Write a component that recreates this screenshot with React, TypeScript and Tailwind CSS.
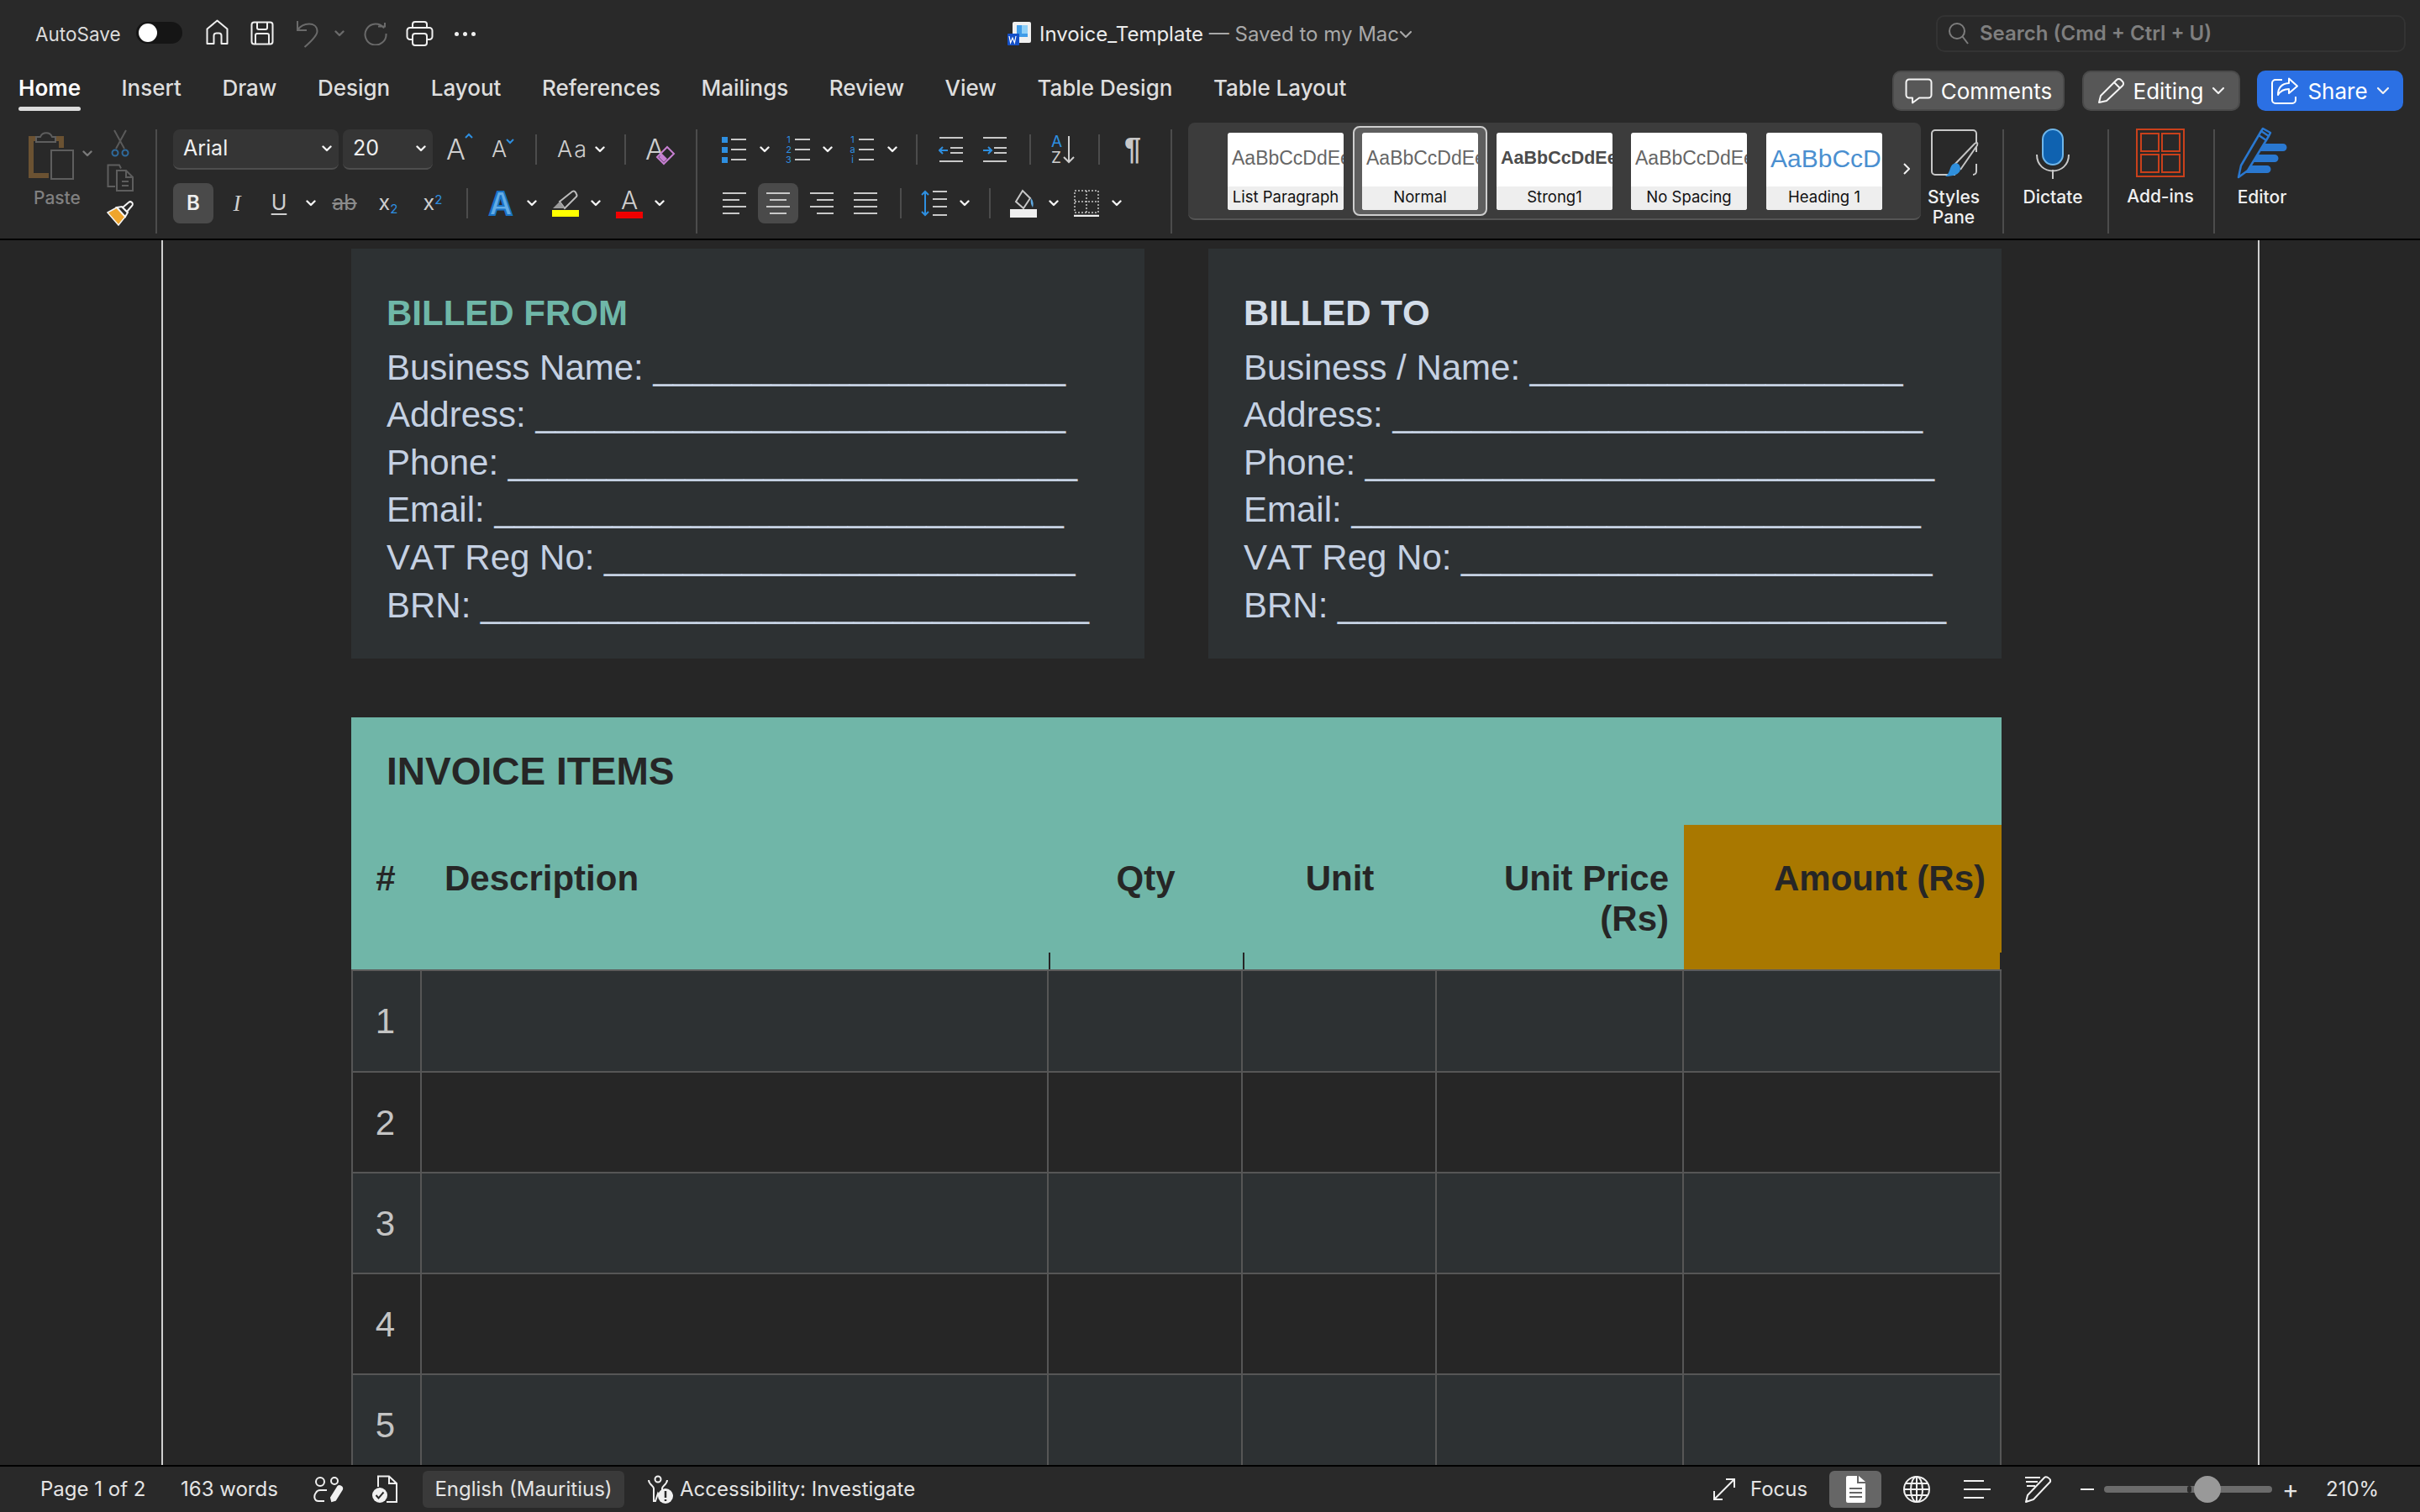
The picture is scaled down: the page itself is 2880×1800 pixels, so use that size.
import React from "react";

const Chev = ({ c = "#f2f2f2", w = 12 }: { c?: string; w?: number }) => (
  <svg width={w} height={(w * 8) / 12} viewBox="0 0 12 8" className="shrink-0" fill="none" stroke={c} strokeWidth={w > 12 ? 1.6 : 2.4} strokeLinecap="round" strokeLinejoin="round"><path d="M1.5 1.5 6 6l4.5-4.5" /></svg>
);
const Div = ({ cls }: { cls: string }) => <div className={`w-[2px] shrink-0 bg-[#4c4c4c] ${cls}`} />;
const Cell = ({ cls, children }: { cls: string; children?: React.ReactNode }) => (
  <div className={`shrink-0 h-[48px] flex items-center justify-center ${cls}`}>{children}</div>
);

const HomeI = () => (<svg width="29" height="31" viewBox="0 0 29 31" fill="none" stroke="#efefef" strokeWidth="2"><path d="M2.5 29V11.5L14.5 1.5l12 10V29h-7V19.5a3 3 0 0 0-3-3h-3a3 3 0 0 0-3 3V29z" strokeLinejoin="round" /></svg>);
const SaveI = () => (<svg width="28" height="29" viewBox="0 0 28 29" fill="none" stroke="#efefef" strokeWidth="2"><rect x="1.5" y="1.5" width="25" height="26" rx="3" /><path d="M8 2v6a2 2 0 0 0 2 2h8a2 2 0 0 0 2-2V2M6 27V17a2 2 0 0 1 2-2h12a2 2 0 0 1 2 2v10" /></svg>);
const UndoI = () => (<svg width="28" height="34" viewBox="0 0 28 34" fill="none" stroke="#6a6a6a" strokeWidth="2"><path d="M2 2v11h11M2.5 12.5C8 4 25 2 25.5 14c.2 5-8 13-15 19" /></svg>);
const RedoI = () => (<svg width="30" height="28" viewBox="0 0 30 28" fill="none" stroke="#6a6a6a" strokeWidth="2"><path d="M25 7.5A12.5 12.5 0 1 0 27.5 14M18 5.5h8V1" /></svg>);
const PrintI = () => (<svg width="33" height="30" viewBox="0 0 33 30" fill="none" stroke="#efefef" strokeWidth="2"><path d="M8 8V4a3 3 0 0 1 3-3h11a3 3 0 0 1 3 3v4M8 22H5a3.5 3.5 0 0 1-3.500-3.500V11A3.500 3.500 0 0 1 5 8h23a3.500 3.500 0 0 1 3.500 3.500v7A3.500 3.500 0 0 1 28 22h-3" /><rect x="8" y="15" width="17" height="14" rx="3" /></svg>);
const WordI = () => (<svg width="30" height="30" viewBox="0 0 30 30"><rect x="7" y="1" width="22" height="25" rx="2" fill="#f0f0f0" /><rect x="12" y="5" width="13" height="14" fill="#3f9be8" /><rect x="18" y="5" width="7" height="10" fill="#8fd0f8" /><rect x="1" y="15" width="14" height="14" rx="1" fill="#1450c8" /><path d="M3 18l1.600 8 2.400-6 2.400 6 1.600-8" stroke="#fff" strokeWidth="1.200" fill="none" /></svg>);
const SearchI = () => (<svg width="26" height="28" viewBox="0 0 26 28" fill="none" stroke="#7d7d7d" strokeWidth="2"><circle cx="11" cy="11" r="9" /><path d="M17.500 17.500 24 26" /></svg>);
const CommentI = () => (<svg width="33" height="31" viewBox="0 0 33 31" fill="none" stroke="#f5f5f5" strokeWidth="2"><path d="M5 1.500h23a3.500 3.500 0 0 1 3.500 3.500v15a3.500 3.500 0 0 1-3.500 3.500H17l-8 6v-6H5A3.500 3.500 0 0 1 1.500 20V5A3.500 3.500 0 0 1 5 1.500z" strokeLinejoin="round" /></svg>);
const PenI = () => (<svg width="33" height="32" viewBox="0 0 33 32" fill="none" stroke="#f5f5f5" strokeWidth="2"><path d="M2 30l2-8L23 3a3.500 3.500 0 0 1 5 0l2 2a3.500 3.500 0 0 1 0 5L11 28z M20 6l7 7" strokeLinejoin="round" /></svg>);
const ShareI = () => (<svg width="34" height="32" viewBox="0 0 34 32" fill="none" stroke="#fff" strokeWidth="2"><path d="M14 3H6a4 4 0 0 0-4 4v20a4 4 0 0 0 4 4h20a4 4 0 0 0 4-4v-4" /><path d="M22 1.500 32 10.500 22 19v-5c-6 0-10 2-13 7 0-9 5-13.500 13-14z" strokeLinejoin="round" /></svg>);

const PasteI = () => (
  <svg width="56" height="60" viewBox="0 0 56 60" fill="none">
    <path d="M39 22V11H3v44h21" stroke="#6b5232" strokeWidth="6" />
    <path d="M9 15V9h5a7.500 7.500 0 0 1 14 0h4v6z" stroke="#5e5e5e" strokeWidth="2" fill="#292929" />
    <rect x="27" y="25" width="26" height="34" stroke="#5e5e5e" strokeWidth="2" fill="#292929" />
  </svg>
);
const CutI = () => (<svg width="22" height="34" viewBox="0 0 22 34" fill="none"><path d="M4 1l12 22M18 1 6 23" stroke="#5a5a5a" strokeWidth="2" /><circle cx="5" cy="28" r="3.500" stroke="#2f6a9c" strokeWidth="2" /><circle cx="17" cy="28" r="3.500" stroke="#2f6a9c" strokeWidth="2" /></svg>);
const CopyI = () => (<svg width="32" height="33" viewBox="0 0 32 33" fill="none" stroke="#5e5e5e" strokeWidth="2"><path d="M10 27H1.500V1.500H15l2 4" /><path d="M12 8h11l8 8v16H12z M23 8v8h8 M18 21h8 M18 26h8" /></svg>);
const PainterI = () => (<svg width="32" height="30" viewBox="0 0 32 30"><path d="M1 14l11-6 10 11-8 10z" fill="#f0a52c" stroke="#f3f3f3" strokeWidth="1.500" /><path d="M12 8 22 19l3-5-7-7z" fill="#292929" stroke="#f3f3f3" strokeWidth="2" /><path d="M19 8l7-6a2.500 2.500 0 0 1 4 4l-6 7z" fill="#292929" stroke="#f3f3f3" strokeWidth="2" /></svg>);

const ListI = ({ kind }: { kind: "b" | "n" | "m" }) => (
  <div className="w-[30px] h-[32px] flex flex-col justify-between shrink-0">
    {[0, 1, 2].map((i) => (
      <div key={i} className="flex items-center h-[8px] gap-[3px]">
        <div className="w-[9px] flex justify-center items-center">
          {kind === "b" ? <div className="w-[7px] h-[7px] bg-[#2e8fe0]" /> : <span className="text-[#2e8fe0] text-[11px] font-['Inter'] leading-none">{kind === "n" ? i + 1 : ["1", "a", "i"][i]}</span>}
        </div>
        <div className="flex-1 h-[2px] bg-[#c8c8c8]" />
      </div>
    ))}
  </div>
);
const IndentI = ({ out }: { out?: boolean }) => (
  <svg width="30" height="32" viewBox="0 0 30 32" fill="none"><path d="M1 2h28M14 14h15M14 20h15M1 30h28" stroke="#c8c8c8" strokeWidth="2" />{out ? <path d="M11 17H1m4-4-4 4 4 4" stroke="#2e8fe0" strokeWidth="2" /> : <path d="M1 17h10m-4-4 4 4-4 4" stroke="#2e8fe0" strokeWidth="2" />}</svg>
);
const Align = ({ d }: { d: string }) => (<svg width="30" height="28" viewBox="0 0 30 28" fill="none" stroke="#c8c8c8" strokeWidth="2"><path d={d} /></svg>);
const LineSp = () => (<svg width="32" height="32" viewBox="0 0 32 32" fill="none"><path d="M14 2h17M14 11h17M14 20h17M14 30h17" stroke="#c8c8c8" strokeWidth="2" /><path d="M5 2v28M1 6l4-4 4 4M1 26l4 4 4-4" stroke="#2e8fe0" strokeWidth="2" /></svg>);
const ShadeI = () => (<svg width="32" height="34" viewBox="0 0 32 34" fill="none"><path d="M15 2 7 15l9 8 8-12z" stroke="#c8c8c8" strokeWidth="2" /><path d="M25 11c3 3 3 8 2 11-2-3-3-7-2-11z" fill="#5fa8e0" /><rect y="24" width="32" height="10" fill="#efefef" /></svg>);
const BorderI = () => (<svg width="30" height="32" viewBox="0 0 30 32" fill="none"><path d="M1 1h28v26H1zM15 1v26M1 14h28" stroke="#c8c8c8" strokeWidth="1.500" strokeDasharray="2 2" /><path d="M0 31h30" stroke="#efefef" strokeWidth="2.500" /></svg>);
const Eraser = () => (<svg width="24" height="24" viewBox="0 0 24 24" fill="none"><path d="M2 14 14 2l8 8-12 12z" stroke="#c67fd1" strokeWidth="2" /><path d="M4 14l4-4 6 6-4 4z" fill="#c67fd1" /></svg>);
const Hl = () => (<svg width="32" height="24" viewBox="0 0 32 24" fill="none"><path d="M9 14 24 2a3 3 0 0 1 4 1l1 2a3 3 0 0 1-1 4L15 22z" stroke="#bdbdbd" strokeWidth="2" /><path d="M9 14l6 8H1z" fill="#9a9a9a" /></svg>);

const StylesPaneI = () => (<svg width="62" height="62" viewBox="0 0 62 62" fill="none"><path d="M33 56H9a4 4 0 0 1-4-4V7a4 4 0 0 1 4-4h45a4 4 0 0 1 4 4v22M58 43v9a4 4 0 0 1-4 4" stroke="#c8c8c8" strokeWidth="2" /><path d="M32 44 56 19c3-2 4-1 3 2L39 50" stroke="#c4c4c4" strokeWidth="2" fill="#292929" /><path d="M31 43c4-2 8 1 8 6 0 7-10 9-18 9 6-3 5-13 10-15z" fill="#2f8fdc" /></svg>);
const MicI = () => (<svg width="40" height="62" viewBox="0 0 40 62" fill="none"><rect x="8" y="2" width="24" height="42" rx="12" fill="#0f62b0" stroke="#6fb6ea" strokeWidth="2" /><path d="M1 32c0 26 38 26 38 0M20 50v11" stroke="#c8c8c8" strokeWidth="2" /></svg>);
const AddI = () => (<svg width="58" height="58" viewBox="0 0 58 58" fill="none" stroke="#c9401b"><rect x="1" y="1" width="56" height="56" strokeWidth="2" /><rect x="6" y="6" width="21" height="21" strokeWidth="2" /><rect x="31" y="6" width="21" height="21" strokeWidth="2" /><rect x="6" y="31" width="21" height="21" strokeWidth="2" /><rect x="31" y="31" width="21" height="21" strokeWidth="2" /></svg>);
const EditorI = () => (<svg width="62" height="62" viewBox="0 0 62 62" fill="none"><path d="M32 20h24a4.500 4.500 0 0 1 0 9H25zM22 33h24a4.500 4.500 0 0 1 0 9H15zM13 46h24a4.500 4.500 0 0 1 0 9H6z" fill="#2a78d0" /><path d="M3 60l3-14L30 5l9 6-25 41z M27 10l9 6 M30 5l2-3 9 5-2 4" stroke="#2a78d0" strokeWidth="2.500" fill="#292929" strokeLinejoin="round" /></svg>);

const ProofI = () => (<svg width="36" height="32" viewBox="0 0 36 32" fill="none" stroke="#f0f0f0" strokeWidth="2"><circle cx="8" cy="7" r="5" /><circle cx="25" cy="6" r="4" /><path d="M13 30H6c-5 0-6-6-3-10 1-2 3-3 5-3h8" /><path d="M22 30l-1-4 8-13c2-2 6 0 5 3l-8 13z" fill="#f0f0f0" /></svg>);
const DocCheckI = () => (<svg width="32" height="34" viewBox="0 0 32 34" fill="none"><path d="M8 14V1.500h13L30 10v22H18M21 1.500V10h9" stroke="#f0f0f0" strokeWidth="2" /><circle cx="10" cy="24" r="9" fill="#f0f0f0" /><path d="M5.500 24l3 3.500 6-7" stroke="#292929" strokeWidth="2" /></svg>);
const AccessI = () => (<svg width="32" height="34" viewBox="0 0 32 34" fill="none"><circle cx="13" cy="5" r="3.500" stroke="#f0f0f0" strokeWidth="2" /><path d="M2 6c0 5 6 7 6 10v15h2l3-9 1 2M24 6c0 5-6 7-6 10v3" stroke="#f0f0f0" strokeWidth="2" /><circle cx="22" cy="25" r="9" fill="#f0f0f0" /><path d="M22 19v8M22 29v2" stroke="#292929" strokeWidth="2.500" /></svg>);
const FocusI = () => (<svg width="26" height="26" viewBox="0 0 26 26" fill="none" stroke="#f0f0f0" strokeWidth="2"><path d="M15 1h10v10M25 1 1 25M1 15v10h10" /></svg>);
const DocI = () => (<svg width="25" height="32" viewBox="0 0 25 32"><path d="M1 2a2 2 0 0 1 2-2h11v9h10v21a2 2 0 0 1-2 2H3a2 2 0 0 1-2-2z M16 0l8 7h-8z" fill="#fff" /><path d="M5 15h15M5 20h15M5 25h15" stroke="#666" strokeWidth="2" /></svg>);
const GlobeI = () => (<svg width="32" height="32" viewBox="0 0 32 32" fill="none" stroke="#f0f0f0" strokeWidth="2"><circle cx="16" cy="16" r="15" /><ellipse cx="16" cy="16" rx="7" ry="15" /><path d="M16 1v30M3 9h26M1 16h30M3 23h26" /></svg>);
const LinesI = () => (<svg width="33" height="22" viewBox="0 0 33 22" fill="none" stroke="#f0f0f0" strokeWidth="2"><path d="M1 1h24M1 11h32M1 21h24" /></svg>);
const DraftI = () => (<svg width="33" height="32" viewBox="0 0 33 32" fill="none" stroke="#f0f0f0" strokeWidth="2"><path d="M1 2h18M2 7h14M3 12h10M2 31l2-8L24 2c2-2 8 1 7 5L11 28z" strokeLinejoin="round" /></svg>);

const tabs = ["Home", "Insert", "Draw", "Design", "Layout", "References", "Mailings", "Review", "View", "Table Design", "Table Layout"];
const sans = "font-['Inter','Liberation_Sans',sans-serif]";
const arial = "font-['Liberation_Sans','Arial',sans-serif]";

const Card = ({ t, l, cls }: { t: string; l: string; cls: string }) => (
  <div className="w-[138px] h-[92px] bg-white rounded-[3px] overflow-hidden flex flex-col shrink-0">
    <div className="h-[64px] flex items-center px-[5px] pb-[3px] overflow-hidden">
      <span className={`${arial} whitespace-nowrap ${cls}`}>{t}</span>
    </div>
    <div className={`flex-1 bg-[#eeeeee] text-[#111] text-[18.5px] leading-none pb-[3px] flex items-center justify-center ${sans} whitespace-nowrap`}>{l}</div>
  </div>
);

const Party = ({ title, tcls, rows }: { title: string; tcls: string; rows: [string, number][] }) => (
  <div className={`w-[944px] h-[488px] bg-[#2d3133] pl-[42px] pt-[49px] ${arial} [font-kerning:none] text-[42px] leading-[56.6px] text-[#c5d1e3]`}>
    <div className={`font-bold mb-[8px] ${tcls}`}>{title}</div>
    {rows.map(([l, n]) => (
      <div key={l} className="whitespace-nowrap">{l} {"_".repeat(n)}</div>
    ))}
  </div>
);

const Tick = () => <div className="absolute -right-[2px] bottom-0 w-[2px] h-[20px] bg-[#262626]" />;

const Row = ({ n, cls }: { n: number; cls: string }) => (
  <div className={`grid grid-cols-[84px_746px_231px_231px_294px_378px] border-b-2 border-[#565656] ${cls}`}>
    <div className={`border-l-2 border-r-2 border-[#565656] pr-[3px] flex items-center justify-center ${arial} text-[42px] text-[#c4c4c4]`}>{n}</div>
    <div className="border-r-2 border-[#565656]" />
    <div className="border-r-2 border-[#565656]" />
    <div className="border-r-2 border-[#565656]" />
    <div className="border-r-2 border-[#565656]" />
    <div className="border-r-2 border-[#565656]" />
  </div>
);

export default function App() {
  return (
    <div className={`w-[2880px] h-[1800px] flex flex-col overflow-hidden bg-[#292929] text-[#e6e6e6] ${sans}`}>
      {/* Title bar */}
      <div className="h-[70px] flex items-start shrink-0">
        <div className="ml-[42px] mt-[25px] text-[22.5px] leading-[32px] w-[120px] text-[#dcdcdc]">AutoSave</div>
        <div className="mt-[26px] w-[55px] h-[26px] rounded-full bg-[#151515] flex items-center pl-[3px] shrink-0">
          <div className="w-[22px] h-[22px] rounded-full bg-white" />
        </div>
        <div className="ml-[27px] mt-[23px]"><HomeI /></div>
        <div className="ml-[25px] mt-[25px]"><SaveI /></div>
        <div className="ml-[26px] mt-[23px]"><UndoI /></div>
        <div className="ml-[18px] mt-[36px]"><Chev c="#6a6a6a" /></div>
        <div className="ml-[22px] mt-[26px]"><RedoI /></div>
        <div className="ml-[21px] mt-[25px]"><PrintI /></div>
        <div className="ml-[25px] mt-[38px] flex gap-[5px]">
          <div className="w-[5px] h-[5px] rounded-full bg-[#efefef]" />
          <div className="w-[5px] h-[5px] rounded-full bg-[#efefef]" />
          <div className="w-[5px] h-[5px] rounded-full bg-[#efefef]" />
        </div>
        <div className="ml-[632px] mt-[25px]"><WordI /></div>
        <div className="ml-[9px] mt-[25px] text-[24px] leading-[32px] whitespace-nowrap w-[420px]">
          <span className="text-[#ececec]">Invoice_Template</span><span className="text-[#a8a8a8]"> — Saved to my Mac</span>
        </div>
        <div className="ml-[8px] mt-[36px]"><Chev c="#a8a8a8" w={16} /></div>
        <div className="ml-[623px] mt-[18px] w-[559px] h-[44px] border-2 border-[#333] rounded-[10px] flex items-center pl-[12px] gap-[12px]">
          <SearchI />
          <span className="text-[24px] font-semibold text-[#7f7f7f]">Search (Cmd + Ctrl + U)</span>
        </div>
      </div>

      {/* Tabs */}
      <div className="h-[64px] flex items-start shrink-0 pl-[22px]">
        <div className="flex gap-[48.5px] text-[26px] leading-[40px] mt-[15px] text-[#dedede] w-[2230px]">
          {tabs.map((t, i) => (
            <div key={t} className={`whitespace-nowrap ${i === 0 ? "font-semibold text-white" : "font-medium"}`}>
              {t}
              {i === 0 && <div className="h-[5px] mt-[2px] rounded-full bg-[#dcdcdc]" />}
            </div>
          ))}
        </div>
        <div className="mt-[14px] w-[205px] h-[48px] rounded-[10px] bg-[#575757] border-2 border-[#4a4a4a] flex items-center justify-center gap-[10px] text-[26px] text-white shrink-0"><CommentI /><span>Comments</span></div>
        <div className="mt-[14px] ml-[21px] w-[188px] h-[48px] rounded-[10px] bg-[#575757] border-2 border-[#4a4a4a] flex items-center justify-center gap-[10px] text-[26px] text-white shrink-0"><PenI /><span>Editing</span><Chev w={16} /></div>
        <div className="mt-[14px] ml-[20px] w-[174px] h-[48px] rounded-[10px] bg-[#2b70e4] flex items-center justify-center gap-[10px] text-[26px] text-white shrink-0"><ShareI /><span>Share</span><Chev w={16} /></div>
      </div>

      {/* Ribbon */}
      <div className="h-[150px] flex items-start shrink-0">
        {/* Clipboard */}
        <div className="w-[185px] h-[124px] mt-[20px] flex shrink-0">
          <div className="ml-[34px] w-[64px] flex flex-col">
            <PasteI />
            <div className="mt-[8px] ml-[6px] text-[21px] leading-[28px] font-medium text-[#808080]">Paste</div>
          </div>
          <div className="mt-[25px] h-[10px]"><Chev c="#7a7a7a" /></div>
          <div className="ml-[17px] w-[32px] flex flex-col items-center">
            <CutI />
            <div className="mt-[7px]"><CopyI /></div>
            <div className="mt-[11px]"><PainterI /></div>
          </div>
        </div>
        <Div cls="h-[124px] mt-[20px]" />
        {/* Font */}
        <div className="w-[641px] pt-[20px] shrink-0">
          <div className="flex items-center h-[48px] pl-[19px]">
            <div className="w-[197px] h-[48px] rounded-[8px] bg-[#353535] border-b-2 border-[#4e4e4e] flex items-center justify-between pl-[12px] pr-[8px] text-[25px] text-[#efefef]"><span>Arial</span><Chev /></div>
            <div className="ml-[5px] w-[107px] h-[48px] rounded-[8px] bg-[#353535] border-b-2 border-[#4e4e4e] flex items-center justify-between pl-[12px] pr-[8px] text-[25px] text-[#efefef]"><span>20</span><Chev /></div>
            <div className="ml-[16px] relative w-[32px] text-[34px] leading-[34px] font-light text-[#cfcfcf]">A<span className="absolute left-[22px] -top-[3px]"><svg width="10" height="8" viewBox="0 0 10 8" fill="none" stroke="#2e8fe0" strokeWidth="2"><path d="M1 6l4-4 4 4" /></svg></span></div>
            <div className="ml-[22px] relative w-[30px] text-[27px] leading-[30px] font-light text-[#cfcfcf]">A<span className="absolute left-[17px] top-[1px]"><svg width="10" height="8" viewBox="0 0 10 8" fill="none" stroke="#2e8fe0" strokeWidth="2"><path d="M1 2l4 4 4-4" /></svg></span></div>
            <Div cls="h-[36px] ml-[22px]" />
            <div className="ml-[24px] w-[44px] text-[27px] leading-[30px] font-light tracking-[2px] text-[#cfcfcf]">Aa</div>
            <div className="ml-[1px]"><Chev /></div>
            <Div cls="h-[36px] ml-[23px]" />
            <div className="ml-[23px] relative w-[36px] text-[34px] leading-[34px] font-light text-[#cfcfcf]">A<span className="absolute left-[12px] top-[12px]"><Eraser /></span></div>
          </div>
          <div className="flex items-center h-[48px] mt-[16px] pl-[19px]">
            <Cell cls="w-[48px] rounded-[8px] bg-[#4a4a4a] text-[24px] font-semibold text-[#eeeeee]">B</Cell>
            <Cell cls="w-[56px] text-[27px] italic text-[#cfcfcf] font-['Liberation_Serif']">I</Cell>
            <Cell cls="w-[44px] text-[25px] underline underline-offset-[4px] text-[#cfcfcf]">U</Cell>
            <Cell cls="w-[32px]"><Chev /></Cell>
            <Cell cls="w-[48px] text-[25px] line-through text-[#8c8c8c]">ab</Cell>
            <Cell cls="w-[56px] text-[25px] text-[#cfcfcf]"><span>x<sub className="text-[15px] text-[#2e8fe0]">2</sub></span></Cell>
            <Cell cls="w-[50px] text-[25px] text-[#cfcfcf]"><span>x<sup className="text-[15px] text-[#2e8fe0]">2</sup></span></Cell>
            <Div cls="h-[36px] ml-[15px]" />
            <Cell cls="w-[58px] ml-[10px] text-[38px] font-bold text-[#63ade6] [-webkit-text-stroke:2px_#1973c6]">A</Cell>
            <Cell cls="w-[16px]"><Chev /></Cell>
            <Cell cls="w-[64px] flex-col"><Hl /><div className="w-[32px] h-[8px] bg-[#ffff00]" /></Cell>
            <Cell cls="w-[8px]"><Chev /></Cell>
            <Cell cls="w-[72px] flex-col text-[30px] leading-[26px] font-light text-[#cfcfcf]"><span>A</span><div className="w-[32px] h-[8px] bg-[#f00000] mt-[1px]" /></Cell>
            <Cell cls="w-[0px]"><Chev /></Cell>
          </div>
        </div>
        <Div cls="h-[124px] mt-[20px]" />
        {/* Paragraph */}
        <div className="w-[563px] pt-[20px] shrink-0">
          <div className="flex items-center h-[48px]">
            <Cell cls="ml-[14px] w-[58px]"><ListI kind="b" /></Cell>
            <Cell cls="w-[16px]"><Chev /></Cell>
            <Cell cls="ml-[2px] w-[58px]"><ListI kind="n" /></Cell>
            <Cell cls="w-[14px]"><Chev /></Cell>
            <Cell cls="ml-[4px] w-[58px]"><ListI kind="m" /></Cell>
            <Cell cls="w-[16px]"><Chev /></Cell>
            <Div cls="h-[36px] ml-[20px]" />
            <Cell cls="ml-[16px] w-[48px]"><IndentI out /></Cell>
            <Cell cls="ml-[4px] w-[48px]"><IndentI /></Cell>
            <Div cls="h-[36px] ml-[17px]" />
            <Cell cls="ml-[14px] w-[48px]">
              <div className="flex items-center gap-[1px]">
                <div className="flex flex-col text-[19px] leading-[19px]"><span className="text-[#2e8fe0]">A</span><span className="text-[#cfcfcf]">Z</span></div>
                <svg width="14" height="34" viewBox="0 0 14 34" fill="none" stroke="#cfcfcf" strokeWidth="2"><path d="M7 1v31M1 26l6 6 6-6" /></svg>
              </div>
            </Cell>
            <Div cls="h-[36px] ml-[18px]" />
            <Cell cls="ml-[15px] w-[48px] text-[36px] font-['Liberation_Sans'] font-bold text-[#c8c8c8]">¶</Cell>
          </div>
          <div className="flex items-center h-[48px] mt-[16px]">
            <Cell cls="ml-[20px] w-[48px]"><Align d="M1 2h28M1 10h20M1 18h28M1 26h20" /></Cell>
            <Cell cls="ml-[4px] w-[48px] rounded-[8px] bg-[#4a4a4a]"><Align d="M1 2h28M5 10h20M1 18h28M5 26h20" /></Cell>
            <Cell cls="ml-[4px] w-[48px]"><Align d="M1 2h28M9 10h20M1 18h28M9 26h20" /></Cell>
            <Cell cls="ml-[4px] w-[48px]"><Align d="M1 2h28M1 10h28M1 18h28M1 26h28" /></Cell>
            <Div cls="h-[36px] ml-[17px]" />
            <Cell cls="ml-[15px] w-[48px]"><LineSp /></Cell>
            <Cell cls="w-[24px]"><Chev /></Cell>
            <Div cls="h-[36px] ml-[17px]" />
            <Cell cls="ml-[15px] w-[48px]"><ShadeI /></Cell>
            <Cell cls="w-[24px]"><Chev /></Cell>
            <Cell cls="ml-[3px] w-[48px]"><BorderI /></Cell>
            <Cell cls="w-[24px]"><Chev /></Cell>
          </div>
        </div>
        <Div cls="h-[124px] mt-[20px]" />
        {/* Gallery */}
        <div className="ml-[19px] mt-[12px] w-[872px] h-[116px] rounded-[8px] bg-[#3c3c3c] border-b-2 border-[#555] flex items-start pl-[47px] pt-[12px] shrink-0">
          <Card t="AaBbCcDdEe" l="List Paragraph" cls="text-[23px] text-[#666666]" />
          <div className="ml-[11px] -mt-[8px] px-[9px] py-[6px] h-[107px] border-2 border-[#cdcdcd] rounded-[8px] bg-[#5e5e5e] shrink-0"><Card t="AaBbCcDdEe" l="Normal" cls="text-[23px] text-[#666666]" /></div>
          <div className="ml-[11px]"><Card t="AaBbCcDdEe" l="Strong1" cls="text-[21.5px] font-bold text-[#4c4c4c]" /></div>
          <div className="ml-[22px]"><Card t="AaBbCcDdEe" l="No Spacing" cls="text-[23px] text-[#666666]" /></div>
          <div className="ml-[23px]"><Card t="AaBbCcDdEe" l="Heading 1" cls="text-[30px] text-[#4a8fd0]" /></div>
          <div className="ml-[25px] mt-[36px]"><svg width="8" height="14" viewBox="0 0 8 14" fill="none" stroke="#f0f0f0" strokeWidth="2"><path d="M1 1l6 6-6 6" /></svg></div>
        </div>
        {/* Right commands */}
        <div className="w-[78px] mt-[18px] flex flex-col items-center shrink-0 text-[21px] leading-[24px] font-medium text-[#f0f0f0]">
          <StylesPaneI />
          <div className="mt-[9px] text-center">Styles<br />Pane</div>
        </div>
        <Div cls="h-[124px] mt-[20px] ml-[19px]" />
        <div className="w-[116px] mt-[18px] flex flex-col items-center shrink-0 text-[21px] leading-[24px] font-medium text-[#f0f0f0]">
          <MicI />
          <div className="mt-[9px]">Dictate</div>
        </div>
        <Div cls="h-[124px] mt-[20px] ml-[7px]" />
        <div className="w-[122px] mt-[19px] flex flex-col items-center shrink-0 text-[21px] leading-[24px] font-medium text-[#f0f0f0]">
          <AddI />
          <div className="mt-[11px]">Add-ins</div>
        </div>
        <Div cls="h-[124px] mt-[20px] ml-[2px]" />
        <div className="w-[112px] mt-[17px] flex flex-col items-center shrink-0 text-[21px] leading-[24px] font-medium text-[#f0f0f0]">
          <EditorI />
          <div className="mt-[10px]">Editor</div>
        </div>
      </div>

      <div className="h-[2px] bg-black shrink-0" />

      {/* Page */}
      <div className="h-[1458px] bg-[#262626] overflow-hidden shrink-0">
        <div className="ml-[192px] w-[2497px] h-full border-x-2 border-[#cfcfcf] pl-[224px] pt-[10px]">
          <div className="flex gap-[76px] w-[1964px]">
            <Party title="BILLED FROM" tcls="text-[#6fb7a8]" rows={[["Business Name:", 21], ["Address:", 27], ["Phone:", 29], ["Email:", 29], ["VAT Reg No:", 24], ["BRN:", 31]]} />
            <Party title="BILLED TO" tcls="text-[#d3dde9]" rows={[["Business / Name:", 19], ["Address:", 27], ["Phone:", 29], ["Email:", 29], ["VAT Reg No:", 24], ["BRN:", 31]]} />
          </div>
          <div className="mt-[70px] w-[1964px]">
            <div className={`h-[128px] bg-[#70b6a8] flex items-center pl-[42px] ${arial} [font-kerning:none] font-bold text-[46px] text-[#262626]`}>INVOICE ITEMS</div>
            <div className={`grid grid-cols-[84px_746px_231px_231px_294px_378px] h-[174px] bg-[#70b6a8] ${arial} font-bold text-[42px] leading-[48px] text-[#262626] border-b-2 border-[#5c5c5c]`}>
              <div className="pt-[40px] pr-[2px] text-center">#</div>
              <div className="pt-[40px] pl-[27px] relative">Description<Tick /></div>
              <div className="pt-[40px] text-center relative">Qty<Tick /></div>
              <div className="pt-[40px] text-center">Unit</div>
              <div className="pt-[40px] pr-[18px] text-right relative">Unit Price<br />(Rs)<Tick /></div>
              <div className="pt-[40px] pr-[19px] text-right bg-[#a97800] relative">Amount (Rs)<div className="absolute right-0 bottom-0 w-[2px] h-[20px] bg-[#262626]" /></div>
            </div>
            <Row n={1} cls="bg-[#2d3133] h-[121px]" />
            <Row n={2} cls="bg-[#262626] h-[120px]" />
            <Row n={3} cls="bg-[#2d3133] h-[120px]" />
            <Row n={4} cls="bg-[#262626] h-[120px]" />
            <Row n={5} cls="bg-[#2d3133] h-[120px]" />
          </div>
        </div>
      </div>

      <div className="h-[2px] bg-black shrink-0" />

      {/* Status bar */}
      <div className="h-[54px] flex items-center shrink-0 text-[24px] text-[#e4e4e4]">
        <span className="ml-[48px] w-[167px] whitespace-nowrap">Page 1 of 2</span>
        <span className="w-[158px] whitespace-nowrap">163 words</span>
        <ProofI />
        <span className="ml-[33px]"><DocCheckI /></span>
        <div className="ml-[29px] w-[240px] h-[44px] rounded-[6px] bg-[#3a3a3a] flex items-center justify-center whitespace-nowrap">English (Mauritius)</div>
        <span className="ml-[27px]"><AccessI /></span>
        <span className="ml-[7px] w-[1230px] whitespace-nowrap">Accessibility: Investigate</span>
        <FocusI />
        <span className="ml-[18px] w-[94px]">Focus</span>
        <div className="w-[62px] h-[44px] rounded-[6px] bg-[#666] flex items-center justify-center shrink-0"><DocI /></div>
        <span className="ml-[26px]"><GlobeI /></span>
        <span className="ml-[39px]"><LinesI /></span>
        <span className="ml-[40px]"><DraftI /></span>
        <div className="ml-[34px] w-[16px] h-[2px] bg-[#eee]" />
        <div className="ml-[12px] w-[200px] h-[8px] rounded-full bg-[#6b6b6b] relative shrink-0">
          <div className="absolute left-[99px] top-0 w-[5px] h-[8px] rounded-full bg-[#2a2a2a]" />
          <div className="absolute left-[107px] -top-[12px] w-[32px] h-[32px] rounded-full bg-[#999]" />
        </div>
        <span className="ml-[12px] w-[17px] text-[30px] leading-none text-center">+</span>
        <span className="ml-[35px] whitespace-nowrap">210%</span>
      </div>
    </div>
  );
}
